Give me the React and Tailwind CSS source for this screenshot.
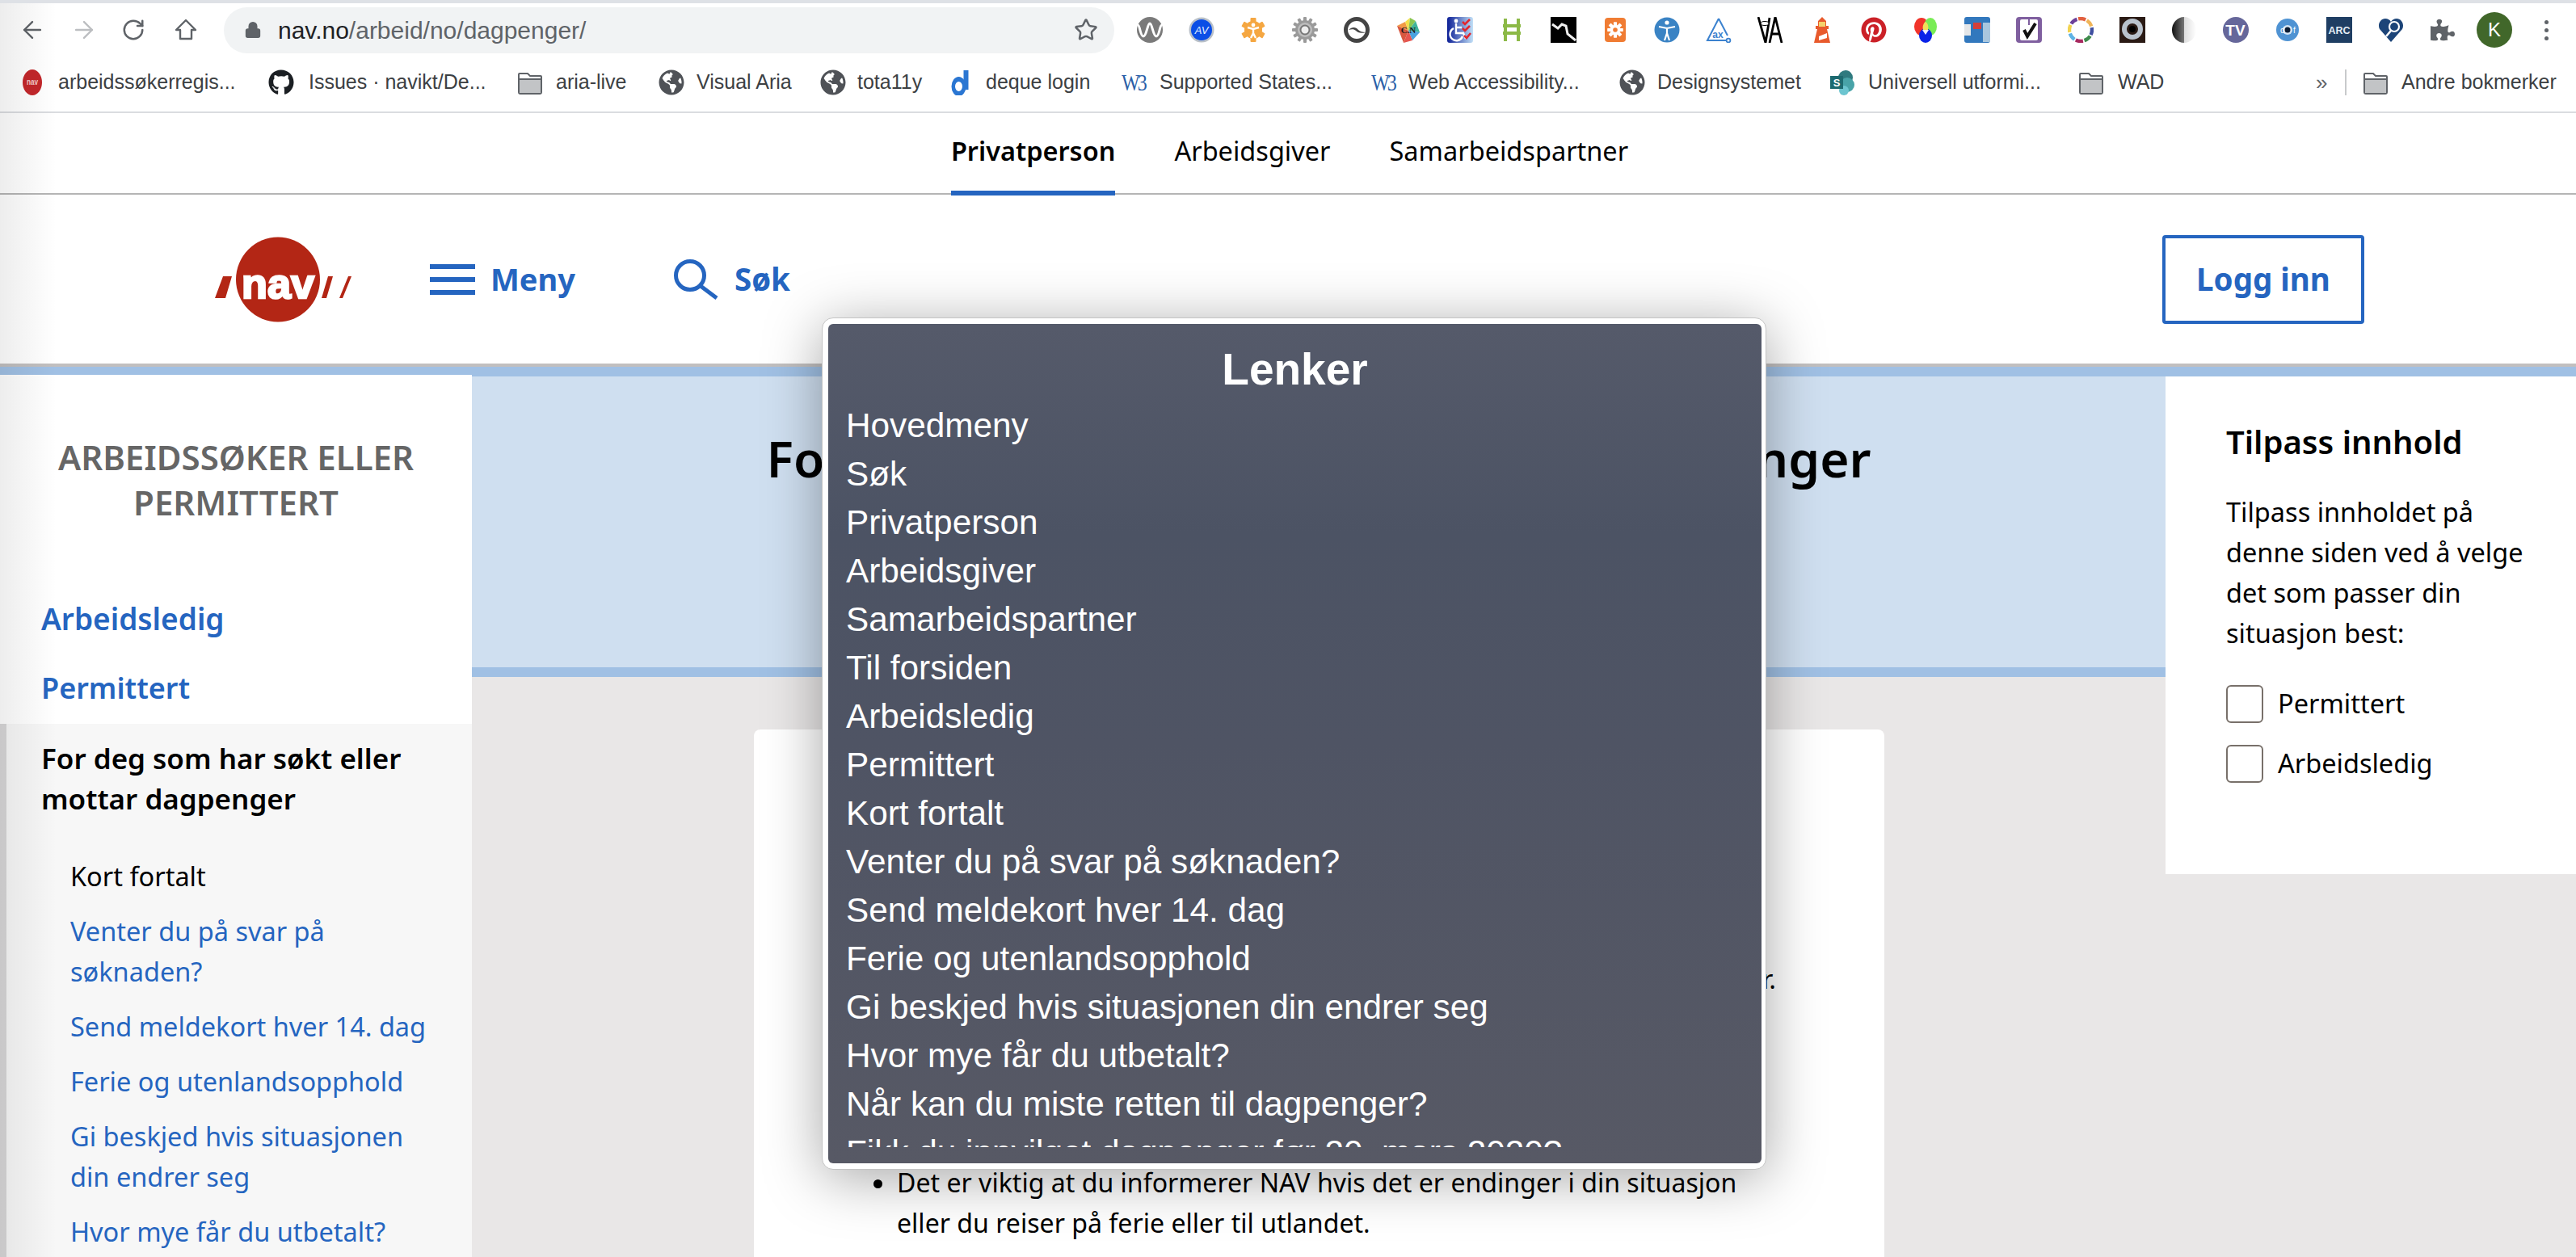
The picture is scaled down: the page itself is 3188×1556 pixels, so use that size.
import React from "react";
import { ArrowLeft, ArrowRight, RotateCw, Star, Lock } from "lucide-react";
import { FaGithub, FaGlobeAmericas, FaPinterest, FaPuzzlePiece } from "react-icons/fa";

const Svg = ({ children, w = 32, h = 32, par }) => (
  <svg width={w} height={h} viewBox="0 0 32 32" preserveAspectRatio={par} className="block shrink-0">{children}</svg>
);

const Gear = ({ n = 8, r = 11, tw = 6, tl = 16, fill }) => (
  <g fill={fill}>
    <circle cx="16" cy="16" r={r} />
    {Array.from({ length: n }).map((_, i) => (
      <rect key={i} x={16 - tw / 2} y={16 - tl} width={tw} height={tl} rx="1" transform={`rotate(${(i * 360) / n} 16 16)`} />
    ))}
  </g>
);

const ringColors = ["#e2603f", "#f0b458", "#3f4fa0", "#3f8a4c", "#a7295f", "#5eb2e4", "#f2d34f", "#6c3f99"];

const extensions = [
  <Svg key="w"><circle cx="16" cy="16" r="16" fill="#7a7a7a" /><path d="M1 10c3 0 3 14 7 14s5-16 8-16 4 16 8 16 4-14 7-14" stroke="#fff" strokeWidth="3" fill="none" /></Svg>,
  <Svg key="av"><circle cx="16" cy="16" r="15.5" fill="#b9c0c8" /><circle cx="16" cy="16" r="13" fill="#0b4ee6" /><text x="16" y="21" textAnchor="middle" fontSize="13" fontStyle="italic" fill="#e8f0ff" fontFamily="Liberation Sans">AV</text></Svg>,
  <Svg key="g1"><Gear fill="#f5a742" r="11" tl="15" tw="7" n="6" /><circle cx="16" cy="10" r="2.4" fill="#fff" /><path d="M9 13l7 2 7-2M16 15v5M16 20l-3 6M16 20l3 6" stroke="#fff" strokeWidth="2.4" fill="none" /></Svg>,
  <Svg key="g2"><Gear fill="#9a9a9a" n="12" r="12" tw="4" tl="16" /><circle cx="16" cy="16" r="9" fill="#bdbdbd" /><circle cx="16" cy="16" r="5.5" fill="#eee" stroke="#777" strokeWidth="2" /></Svg>,
  <Svg key="c"><circle cx="16" cy="16" r="13.5" fill="#fff" stroke="#444" strokeWidth="5" /><path d="M6 16c4-4 9-4 12 0 2 2 5 3 9 3-6 2-10 0-12-2-2-2-5-2-9-1z" fill="#444" /></Svg>,
  <Svg key="can"><path d="M2 11L12 6 16 17z" fill="#f29a46" /><path d="M12 6l6-5-2 16z" fill="#f3e04c" /><path d="M18 1l7 4-9 12z" fill="#8ac650" /><path d="M25 5l5 14-14-2z" fill="#3fb39b" /><path d="M30 19l-9 10-5-12z" fill="#4aa3df" /><path d="M21 29l-11 3 6-15z" fill="#e5554f" /><path d="M10 32L2 11l14 6z" fill="#d8573f" /><text x="16" y="20" textAnchor="middle" fontSize="11" fontWeight="700" fill="#1c1c1c" fontFamily="Liberation Serif">C.N</text></Svg>,
  <Svg key="wc"><defs><linearGradient id="wcg" x1="0" x2="1"><stop offset="0" stopColor="#0c1f96" /><stop offset="1" stopColor="#c2e0f7" /></linearGradient></defs><rect width="32" height="32" rx="3" fill="url(#wcg)" /><circle cx="11" cy="5" r="2.4" fill="#fff" /><path d="M11 8v12h9l3 7M11 13h7M8 14a8 8 0 1 0 11 10" stroke="#fff" strokeWidth="2.4" fill="none" /><path d="M19 6l3 3 6-6M19 14l3 3 6-6M21 23l3 3 5-6" stroke="#e2262e" strokeWidth="2.6" fill="none" /></Svg>,
  <Svg key="l"><path d="M8 2v28M24 2v28M5 11h22M5 20h22" stroke="#8cb947" strokeWidth="4" fill="none" /></Svg>,
  <Svg key="b"><rect width="32" height="32" fill="#000" /><path d="M2 9l7 5 5-5 5 2 2 10 10 8" stroke="#eee" strokeWidth="3" fill="none" /></Svg>,
  <Svg key="o"><rect x="3" y="1" width="26" height="30" rx="4" fill="#f07c33" /><g transform="translate(4.8 4.8) scale(.7)"><Gear fill="#fff" r="9" tl="14" tw="6" n="8" /><circle cx="16" cy="16" r="4" fill="#f07c33" /></g></Svg>,
  <Svg key="a"><circle cx="16" cy="16" r="15.5" fill="#3a83c4" /><circle cx="16" cy="7" r="2.6" fill="#fff" /><path d="M6 12l10 2 10-2M16 14v6M16 20l-3 9M16 20l3 9" stroke="#fff" strokeWidth="2.2" fill="none" /></Svg>,
  <Svg key="ax"><path d="M16 2L2 29h23" stroke="#3b82cf" strokeWidth="2" fill="none" /><path d="M16 2l11 21" stroke="#3b82cf" strokeWidth="2" fill="none" /><circle cx="28" cy="29" r="2.4" fill="none" stroke="#3b82cf" strokeWidth="1.8" /><text x="15" y="26" textAnchor="middle" fontSize="12" fontWeight="700" fill="#3b82cf" fontFamily="Liberation Sans">ax</text></Svg>,
  <Svg key="va"><path d="M1 0l9 32L15 1M15 32L22 0l8 32M18 21h10" stroke="#000" strokeWidth="2.8" fill="none" /><ellipse cx="9" cy="8" rx="5" ry="2.5" fill="#fff" stroke="#000" /></Svg>,
  <Svg key="lh"><path d="M16 0l5 5v6h3v4h-2l4 17H6l4-17H8v-4h3V5z" fill="#e85a2c" /><rect x="12" y="6" width="8" height="6" fill="#f4d36b" /><path d="M12 24l10-4v6l-10 3z" fill="#fff" /></Svg>,
  <Svg key="p"><foreignObject width="32" height="32"><FaPinterest size={32} color="#cb2027" /></foreignObject></Svg>,
  <Svg key="rgb"><ellipse cx="11" cy="12" rx="9" ry="11" fill="#f1332a" /><ellipse cx="22" cy="12" rx="8" ry="11" fill="#79ec55" /><ellipse cx="16" cy="23" rx="8" ry="9" fill="#0a22e8" /><path d="M16 6c3 2 4 6 3 10h-6c-1-4 0-8 3-10z" fill="#f1e05a" /><path d="M12 16h8l-4 6z" fill="#eef" /></Svg>,
  <Svg key="tr"><rect width="32" height="32" rx="3" fill="#3278bd" /><rect x="0" y="9" width="8" height="14" fill="#e4e6e8" /><rect x="23" y="7" width="9" height="24" fill="#a8c6de" /><rect x="11" y="7" width="10" height="8" fill="#d43f3a" /></Svg>,
  <Svg key="ck"><rect width="32" height="32" rx="4" fill="#7f5f9f" /><rect x="5" y="3" width="22" height="26" rx="2" fill="#fff" /><path d="M16 3v7" stroke="#7f5f9f" strokeWidth="2" /><path d="M10 16l4 8 10-16" stroke="#111" strokeWidth="4" fill="none" /></Svg>,
  <Svg key="ring">{ringColors.map((c, i) => (<path key={i} d="M16 2A14 14 0 0 1 24.6 5" transform={`rotate(${i * 45 - 12} 16 16)`} stroke={c} strokeWidth="4.4" fill="none" />))}</Svg>,
  <Svg key="ds"><rect width="32" height="32" fill="#2a1a14" /><circle cx="16" cy="15" r="10" fill="none" stroke="#b9c2cc" strokeWidth="6" /><circle cx="16" cy="15" r="4" fill="#000" /></Svg>,
  <Svg key="cm"><defs><linearGradient id="cmg" x1="0" x2="1"><stop offset="0" stopColor="#111" /><stop offset=".5" stopColor="#777" /><stop offset=".5" stopColor="#ddd" /><stop offset="1" stopColor="#fff" /></linearGradient></defs><ellipse cx="16" cy="16" rx="15" ry="16" fill="url(#cmg)" /></Svg>,
  <Svg key="tv"><circle cx="16" cy="16" r="16" fill="#66679a" /><text x="15.5" y="23" textAnchor="middle" fontSize="19" fontWeight="700" fill="#fff" fontFamily="Liberation Sans">TV</text></Svg>,
  <Svg key="dof"><circle cx="16" cy="16" r="14" fill="#4f93d3" /><circle cx="16" cy="16" r="6" fill="#d5e6f5" /><circle cx="16" cy="16" r="3.5" fill="#0c1d33" /><text x="7" y="20" fontSize="10" fill="#fff" fontFamily="Liberation Sans">d</text><text x="23" y="20" fontSize="10" fill="#fff" fontFamily="Liberation Sans">f</text></Svg>,
  <Svg key="arc"><rect width="32" height="32" fill="#1f3e63" /><text x="16" y="21" textAnchor="middle" fontSize="12.5" fontWeight="700" fill="#e6edf5" fontFamily="Liberation Sans">ARC</text></Svg>,
  <Svg key="ht"><path d="M16 31L2 15C-1 9 3 2 9 2c3 0 5 1 7 4 2-3 4-4 7-4 6 0 10 7 7 13z" fill="#1c4478" /><circle cx="20" cy="12" r="6" fill="#1c4478" stroke="#fff" strokeWidth="2.2" /><path d="M16 17l-6 7" stroke="#fff" strokeWidth="2.6" /></Svg>,
  <span key="pz" className="block"><FaPuzzlePiece size={30} color="#5f6368" /></span>,
];

const FolderIcon = () => (
  <Svg>
    <path d="M3 5h10l3 3h13a1 1 0 0 1 1 1v19a2 2 0 0 1-2 2H4a2 2 0 0 1-2-2V6a1 1 0 0 1 1-1z" fill="#fff" stroke="#5f6368" strokeWidth="2" />
    <path d="M3 13h26v15a1 1 0 0 1-1 1H4a1 1 0 0 1-1-1z" fill="#c2c4c6" />
    <path d="M3 12h26" stroke="#5f6368" strokeWidth="2" />
  </Svg>
);
const Globe = () => <span className="block w-8"><FaGlobeAmericas size={32} color="#4f5257" /></span>;
const W3 = () => <span className="block w-[27px] text-[24px] tracking-[-3px] font-normal leading-none scale-y-125 text-[#2a5fa8] [font-family:'Liberation_Serif',serif]">W3</span>;

const bookmarks = [
  { t: "arbeidssøkerregis...", w: "w-[304px]", i: <Svg w={24} par="none"><ellipse cx="16" cy="16" rx="16" ry="16" fill="#c3272b" /><text x="16" y="19" textAnchor="middle" fontSize="11" fontWeight="700" fill="#f3c9c9" fontFamily="Liberation Sans">nav</text></Svg>, g: "gap-[20px]" },
  { t: "Issues · navikt/De...", w: "w-[308px]", i: <span className="block"><FaGithub size={32} color="#1b1f23" /></span>, g: "gap-[18px]" },
  { t: "aria-live", w: "w-[175px]", i: <FolderIcon />, g: "gap-[16px]" },
  { t: "Visual Aria", w: "w-[200px]", i: <Globe />, g: "gap-[15px]" },
  { t: "tota11y", w: "w-[161px]", i: <Globe />, g: "gap-[14px]" },
  { t: "deque login", w: "w-[212px]", i: <Svg w={24} par="none"><circle cx="14" cy="21" r="9" fill="none" stroke="#2a76d2" strokeWidth="6" /><path d="M26 1v24" stroke="#2a76d2" strokeWidth="8" /></Svg>, g: "gap-[20px]" },
  { t: "Supported States...", w: "w-[309px]", i: <W3 />, g: "gap-[20px]" },
  { t: "Web Accessibility...", w: "w-[307px]", i: <W3 />, g: "gap-[19px]" },
  { t: "Designsystemet", w: "w-[260px]", i: <Globe />, g: "gap-[15px]" },
  { t: "Universell utformi...", w: "w-[308px]", i: <Svg><circle cx="20" cy="10" r="9" fill="#2f7a7f" /><circle cx="22" cy="19" r="9" fill="#48a3a8" /><circle cx="18" cy="26" r="6" fill="#6cc5d0" /><rect x="1" y="8" width="16" height="16" fill="#1d6a70" /><text x="9" y="21" textAnchor="middle" fontSize="13" fontWeight="700" fill="#fff" fontFamily="Liberation Sans">S</text></Svg>, g: "gap-[16px]" },
  { t: "WAD", w: "w-[295px]", i: <FolderIcon />, g: "gap-[17px]" },
];

const popupLinks = [
  "Hovedmeny", "Søk", "Privatperson", "Arbeidsgiver", "Samarbeidspartner", "Til forsiden", "Arbeidsledig", "Permittert",
  "Kort fortalt", "Venter du på svar på søknaden?", "Send meldekort hver 14. dag", "Ferie og utenlandsopphold",
  "Gi beskjed hvis situasjonen din endrer seg", "Hvor mye får du utbetalt?", "Når kan du miste retten til dagpenger?",
  "Fikk du innvilget dagpenger før 20. mars 2020?",
];

function ChromeBars() {
  return (
    <>
      <div className="h-[4px] bg-[#dee1e6]" />
      <div className="h-[66px] flex items-center bg-white">
        <div className="w-[277px] flex items-center shrink-0">
          <ArrowLeft size={34} strokeWidth={1.7} color="#5f6368" className="ml-[23px]" />
          <ArrowRight size={34} strokeWidth={1.7} color="#bcbec1" className="ml-[30px]" />
          <RotateCw size={30} strokeWidth={2} color="#5f6368" className="ml-[29px]" />
          <svg width="30" height="30" viewBox="0 0 30 30" className="ml-[35px]"><path d="M15 3L3 15h5v11h14V15h5z" fill="none" stroke="#5f6368" strokeWidth="2.4" strokeLinejoin="round" /></svg>
        </div>
        <div className="w-[1102px] h-[57px] rounded-full bg-[#f1f3f4] flex items-center shrink-0">
          <Lock size={22} color="#5f6368" fill="#5f6368" className="ml-[25px]" />
          <span className="ml-[20px] text-[30px] text-[#202124] [font-family:'Liberation_Sans',sans-serif]">nav.no<span className="text-[#5f6368]">/arbeid/no/dagpenger/</span></span>
          <Star size={30} strokeWidth={2} color="#5f6368" className="ml-auto mr-[20px]" />
        </div>
        <div className="ml-[12px] flex items-center">
          {extensions.map((e, i) => (
            <div key={i} className="w-[64px] h-[40px] flex items-center justify-center shrink-0">{e}</div>
          ))}
          <div className="w-[64px] flex items-center justify-center shrink-0">
            <div className="w-[44px] h-[44px] rounded-full bg-[#41672a] text-white text-[24px] flex items-center justify-center [font-family:'Liberation_Sans',sans-serif]">K</div>
          </div>
          <div className="w-[64px] flex flex-col items-center gap-[5px]">
            <span className="w-[5px] h-[5px] rounded-full bg-[#5f6368]" />
            <span className="w-[5px] h-[5px] rounded-full bg-[#5f6368]" />
            <span className="w-[5px] h-[5px] rounded-full bg-[#5f6368]" />
          </div>
        </div>
      </div>
      <div className="h-[70px] pb-[4px] border-b-2 border-[#dadce0] bg-white flex items-center pl-[28px] text-[25px] text-[#3c4043] [font-family:'Liberation_Sans',sans-serif] whitespace-nowrap">
        {bookmarks.map((b) => (
          <div key={b.t} className={`flex items-center shrink-0 ${b.w} ${b.g}`}>{b.i}<span>{b.t}</span></div>
        ))}
        <span className="ml-[-1px] w-[36px] text-[26px] text-[#5f6368]">»</span>
        <span className="w-[2px] h-[32px] bg-[#c8cacc] mr-[20px]" />
        <div className="flex items-center gap-[16px]"><FolderIcon /><span>Andre bokmerker</span></div>
      </div>
    </>
  );
}

function Logo() {
  return (
    <svg width="170" height="106" viewBox="0 0 170 106" className="block shrink-0">
      <ellipse cx="78" cy="53" rx="52" ry="52.5" fill="#b32615" />
      <path d="M10 49h11l-8 27H0zM140 49h6l-8 27h-6zM165 49h4l-11 27h-4z" fill="#b32615" />
      <text x="78" y="76" textAnchor="middle" fontSize="52" fontWeight="700" textLength="90" lengthAdjust="spacingAndGlyphs" fill="#fff" stroke="#fff" strokeWidth="2.5" fontFamily="Liberation Sans">nav</text>
    </svg>
  );
}

function Sidebar() {
  return (
    <aside className="w-[584px] shrink-0 bg-white h-[1092px]">
      <h2 className="pt-[74px] text-center text-[42px] leading-[56px] font-semibold text-[#666]">ARBEIDSSØKER ELLER<br />PERMITTERT</h2>
      <a className="block mt-[91px] pl-[51px] text-[37px] leading-[50px] font-semibold text-[#2565c0]">Arbeidsledig</a>
      <a className="block mt-[36px] pl-[51px] text-[36px] leading-[50px] font-semibold text-[#2565c0]">Permittert</a>
      <div className="mt-[19px] border-l-8 border-[#d8d7d8] bg-[#f7f7f7] pt-[18px] pb-[40px]">
        <p className="pl-[43px] text-[35px] leading-[50px] font-semibold text-black">For deg som har søkt eller<br />mottar dagpenger</p>
        <ul className="mt-[46px] pl-[79px] pr-[40px] flex flex-col gap-[18px] text-[32.5px] leading-[50px] text-[#2565c0]">
          <li className="text-black">Kort fortalt</li>
          <li>Venter du på svar på<br />søknaden?</li>
          <li>Send meldekort hver 14. dag</li>
          <li>Ferie og utenlandsopphold</li>
          <li>Gi beskjed hvis situasjonen<br />din endrer seg</li>
          <li>Hvor mye får du utbetalt?</li>
        </ul>
      </div>
    </aside>
  );
}

function Tilpass() {
  return (
    <aside className="w-[508px] shrink-0">
      <div className="border-t-2 border-[#a0c0e4] bg-white h-[618px] pl-[75px] pt-[56px]">
        <h3 className="text-[40px] leading-[50px] font-semibold text-black">Tilpass innhold</h3>
        <p className="mt-[37px] text-[32.5px] leading-[50px] text-black">Tilpass innholdet på<br />denne siden ved å velge<br />det som passer din<br />situasjon best:</p>
        <div className="mt-[39px] flex flex-col gap-[27px] text-[32.5px] text-black">
          <label className="flex items-center gap-[18px] h-[47px]"><span className="w-[46px] h-[47px] border-2 border-[#78706a] rounded-[6px] bg-white" />Permittert</label>
          <label className="flex items-center gap-[18px] h-[47px]"><span className="w-[46px] h-[47px] border-2 border-[#78706a] rounded-[6px] bg-white" />Arbeidsledig</label>
        </div>
      </div>
    </aside>
  );
}

function Centre() {
  return (
    <main className="flex-1 min-w-0">
      <div className="h-[374px] border-t-2 border-b-12 border-[#a0c0e4] bg-[#cfdff0] pt-[56px] text-center">
        <h1 className="text-[62.2px] leading-[90px] font-semibold text-black whitespace-nowrap">For deg som har søkt eller mottar dagpenger</h1>
      </div>
      <div className="ml-[349px] w-[1399px] mt-[65px] h-[900px] rounded-lg bg-white text-[32.5px] leading-[50px] text-black">
        <p className="pt-[284px] pr-[134px] text-right">Les mer her.</p>
        <ul className="mt-[202px] pl-[177px] w-[1250px] list-disc text-[32.1px]">
          <li>Det er viktig at du informerer NAV hvis det er endinger i din situasjon eller du reiser på ferie eller til utlandet.</li>
        </ul>
      </div>
    </main>
  );
}

export default function App() {
  return (
    <div className="relative w-[3188px] h-[1556px] overflow-hidden bg-[#e9e7e7] [font-family:'Noto_Sans',sans-serif]">
      <ChromeBars />
      <nav className="h-[101px] bg-white border-b-2 border-[#b5b5b5] flex justify-center gap-[73px] text-[32.5px] text-black">
        <a className="relative h-[100px] pb-[5px] flex items-center font-semibold ml-[4px]">Privatperson<span className="absolute left-0 right-0 bottom-[-2px] h-[6px] bg-[#2565c0]" /></a>
        <a className="h-[100px] pb-[5px] flex items-center">Arbeidsgiver</a>
        <a className="h-[100px] pb-[5px] flex items-center">Samarbeidspartner</a>
      </nav>
      <header className="h-[209px] bg-white flex items-center pl-[266px] pr-[262px] text-[#2565c0]">
        <Logo />
        <div className="ml-[96px] flex items-center gap-[19px]">
          <span className="flex flex-col gap-[10px] w-[56px]">
            <span className="h-[6px] bg-[#2565c0]" /><span className="h-[6px] bg-[#2565c0]" /><span className="h-[6px] bg-[#2565c0]" />
          </span>
          <span className="text-[38px] font-bold">Meny</span>
        </div>
        <div className="ml-[122px] flex items-center gap-[19px]">
          <svg width="56" height="50" viewBox="0 0 56 50" fill="none" stroke="#2565c0" className="block shrink-0">
            <ellipse cx="20" cy="20" rx="17.5" ry="17.5" strokeWidth="5" />
            <path d="M33 33l20 15" strokeWidth="5" />
          </svg>
          <span className="text-[38.5px] font-bold">Søk</span>
        </div>
        <button className="ml-auto w-[250px] h-[110px] border-4 border-[#2565c0] rounded-[4px] text-[38.5px] font-bold">Logg inn</button>
      </header>
      <div className="h-[4px] bg-[#c1bfbf]" />
      <div className="h-[10px] bg-[#a0c0e4]" />
      <div className="flex">
        <Sidebar />
        <Centre />
        <Tilpass />
      </div>
      <div className="absolute left-0 top-[4px] bottom-0 w-[70px] bg-gradient-to-r from-black/7 to-transparent pointer-events-none" />
      <div className="absolute left-[1017px] top-[393px] w-[1169px] h-[1055px] rounded-[14px] bg-white pl-[7px] pr-[5px] py-[7px] border border-[#c4c4c4] shadow-[0_10px_70px_rgba(0,0,0,0.35)] text-white [font-family:'Liberation_Sans',sans-serif]">
        <div className="h-full rounded-[6px] bg-[linear-gradient(180deg,#555a6a_0%,#4c5364_25%,#4f5464_50%,#575965_100%)]">
          <h2 className="h-[96px] pt-[16px] flex items-center justify-center text-[55px] font-bold">Lenker</h2>
          <ul className="h-[923px] overflow-hidden pl-[22px]">
            {popupLinks.map((l) => (
              <li key={l} className="h-[60px] leading-[60px] text-[42.3px] whitespace-nowrap">{l}</li>
            ))}
          </ul>
        </div>
      </div>
    </div>
  );
}
